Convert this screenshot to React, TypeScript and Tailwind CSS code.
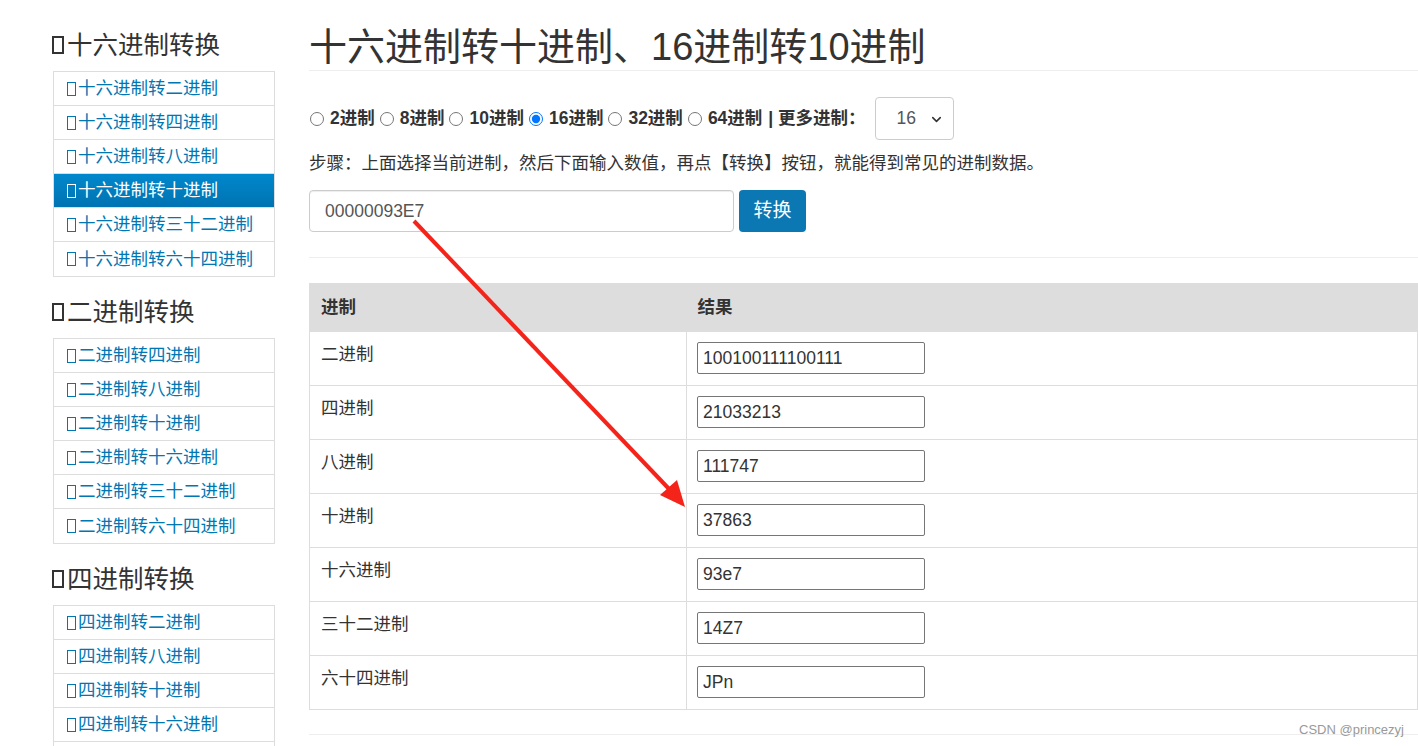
import { ChevronDown } from "lucide-react";

const FONT = "font-['Liberation_Sans','Noto_Sans_CJK_SC',sans-serif]";

const groups = [
  {
    title: "十六进制转换",
    items: ["十六进制转二进制", "十六进制转四进制", "十六进制转八进制", "十六进制转十进制", "十六进制转三十二进制", "十六进制转六十四进制"],
    active: 3,
  },
  {
    title: "二进制转换",
    items: ["二进制转四进制", "二进制转八进制", "二进制转十进制", "二进制转十六进制", "二进制转三十二进制", "二进制转六十四进制"],
    active: -1,
  },
  {
    title: "四进制转换",
    items: ["四进制转二进制", "四进制转八进制", "四进制转十进制", "四进制转十六进制", "四进制转三十二进制", "四进制转六十四进制"],
    active: -1,
  },
];

const radios = ["2进制", "8进制", "10进制", "16进制", "32进制", "64进制"];

const results = [
  { name: "二进制", value: "100100111100111" },
  { name: "四进制", value: "21033213" },
  { name: "八进制", value: "111747" },
  { name: "十进制", value: "37863" },
  { name: "十六进制", value: "93e7" },
  { name: "三十二进制", value: "14Z7" },
  { name: "六十四进制", value: "JPn" },
];

// missing icon glyph box, as the page's icon font failed to load
function Box({ big }: { big?: boolean }) {
  return big ? (
    <span className="inline-block w-[12px] h-[18px] border-2 border-[#333] mr-[3px] shrink-0" />
  ) : (
    <span className="inline-block w-[9px] h-[14px] border-[1.5px] border-current mr-[2px] shrink-0" />
  );
}

function Sidebar() {
  return (
    <aside className="w-[222px] shrink-0">
      {groups.map((g, gi) => (
        <div key={gi} className={gi === 0 ? "mt-[5px]" : "mt-[20px]"}>
          <h3 className="flex items-center text-[25.5px] leading-[30px] text-[#333] mb-[11px] -ml-px">
            <Box big />
            {g.title}
          </h3>
          <ul className="border border-[#ddd] divide-y divide-[#ddd]">
            {g.items.map((it, i) => (
              <li
                key={i}
                className={
                  i === g.active
                    ? "h-[34px] flex items-center pl-[13px] text-[17.5px] text-white bg-linear-to-b from-[#0088cc] to-[#0073b2]"
                    : "h-[34px] flex items-center pl-[13px] text-[17.5px] text-[#0077b3]"
                }
              >
                <Box />
                {it}
              </li>
            ))}
          </ul>
        </div>
      ))}
    </aside>
  );
}

function Arrow() {
  return (
    <svg className="absolute left-0 top-0 pointer-events-none" width="1418" height="746">
      <line x1="414" y1="221" x2="671" y2="491" stroke="#f5241a" strokeWidth="4" />
      <polygon points="685,507 660,495 677,480" fill="#f5241a" />
    </svg>
  );
}

export default function App() {
  return (
    <div className={`${FONT} relative w-full h-screen overflow-hidden bg-white text-[#333]`}>
      <div className="flex pt-[25px] pl-[53px] gap-[34px]">
        <Sidebar />

        <main className="flex-1 min-w-0">
          <h1 className="text-[38px] leading-[45px] font-normal text-[#333] border-b border-[#eee]">
            十六进制转十进制、16进制转10进制
          </h1>

          <div className="mt-[26px] h-[43px] flex items-center text-[17.5px] font-bold">
            {radios.map((r, i) => (
              <label key={i} className="flex items-center gap-[6px] mr-[4px]">
                <input type="radio" name="base" defaultChecked={i === 3} className="w-[14px] h-[14px] ml-px" />
                {r}
              </label>
            ))}
            <span className="ml-[2px]">| 更多进制：</span>
            <div className="relative ml-[9px]">
              <select
                defaultValue="16"
                className="appearance-none w-[79px] h-[43px] border border-[#ccc] rounded-[4px] pl-[21px] text-[17.5px] font-normal text-[#555] bg-white"
              >
                <option value="2">2</option>
                <option value="8">8</option>
                <option value="10">10</option>
                <option value="16">16</option>
                <option value="32">32</option>
                <option value="64">64</option>
              </select>
              <ChevronDown size={15} strokeWidth={2.5} className="absolute right-[10px] top-[15px] text-[#333]" />
            </div>
          </div>

          <p className="mt-[12px] text-[17.5px] leading-[22px]">
            步骤：上面选择当前进制，然后下面输入数值，再点【转换】按钮，就能得到常见的进制数据。
          </p>

          <div className="mt-[16px] flex gap-[5px]">
            <input
              defaultValue="00000093E7"
              className="w-[425px] h-[42px] border border-[#ccc] rounded-[4px] px-[15px] text-[17.5px] text-[#555] shadow-[inset_0_1px_1px_rgba(0,0,0,0.075)]"
            />
            <button className="w-[67px] h-[42px] rounded-[4px] bg-[#0b77b3] text-white text-[19px]">转换</button>
          </div>

          <div className="mt-[25px] border-t border-[#eee]" />

          <table className="mt-[25px] w-full border-collapse border border-[#ddd] text-[17.5px]">
            <thead>
              <tr className="bg-[#ddd] h-[48px]">
                <th className="w-[377px] text-left font-bold pl-[11px] align-middle">进制</th>
                <th className="text-left font-bold pl-[11px] align-middle">结果</th>
              </tr>
            </thead>
            <tbody>
              {results.map((r, i) => (
                <tr key={i} className="h-[54px] border-t border-[#ddd]">
                  <td className="align-top pt-[11px] pl-[11px] leading-[22px] border-r border-[#ddd]">{r.name}</td>
                  <td className="align-top pt-[10px] pl-[10px]">
                    <input
                      readOnly
                      value={r.value}
                      className="w-[228px] h-[32px] border border-[#767676] rounded-[2px] px-[5px] text-[17.5px] text-[#333]"
                    />
                  </td>
                </tr>
              ))}
            </tbody>
          </table>

          <div className="mt-[24px] border-t border-[#eee]" />
        </main>
      </div>

      <Arrow />

      <span className="absolute right-[14px] top-[720px] text-[13px] text-[#999] font-['Liberation_Sans',sans-serif]">
        CSDN @princezyj
      </span>
    </div>
  );
}
